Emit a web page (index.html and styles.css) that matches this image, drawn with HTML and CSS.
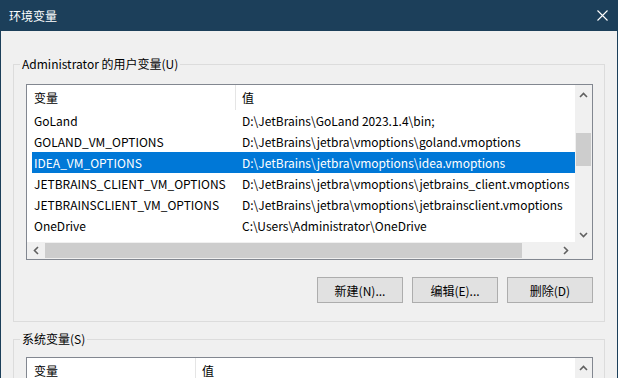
FILE: index.html
```html
<!DOCTYPE html>
<html lang="zh-CN">
<head>
  <meta charset="UTF-8">
  <meta name="viewport" content="width=device-width, initial-scale=1.0">
  <title>环境变量</title>
  <link rel="stylesheet" href="styles.css">
</head>
<body>
  <div class="window">
    <div class="titlebar">
      <span class="title">环境变量</span>
      <svg class="close" width="11" height="11" viewBox="0 0 11 11">
        <path d="M0.5 0.5 L10.5 10.5 M10.5 0.5 L0.5 10.5" stroke="#fff" stroke-width="1.1" fill="none"/>
      </svg>
    </div>

    <div class="dialog">
      <fieldset class="group group-user">
        <legend>Administrator 的用户变量(U)</legend>
        <div class="listview">
          <div class="viewport">
            <div class="row head">
              <div class="cell">变量</div>
              <div class="cell">值</div>
            </div>
            <div class="row">
              <div class="cell">GoLand</div>
              <div class="cell">D:\JetBrains\GoLand 2023.1.4\bin;</div>
            </div>
            <div class="row">
              <div class="cell">GOLAND_VM_OPTIONS</div>
              <div class="cell">D:\JetBrains\jetbra\vmoptions\goland.vmoptions</div>
            </div>
            <div class="row selected">
              <div class="cell">IDEA_VM_OPTIONS</div>
              <div class="cell">D:\JetBrains\jetbra\vmoptions\idea.vmoptions</div>
            </div>
            <div class="row">
              <div class="cell">JETBRAINS_CLIENT_VM_OPTIONS</div>
              <div class="cell">D:\JetBrains\jetbra\vmoptions\jetbrains_client.vmoptions</div>
            </div>
            <div class="row">
              <div class="cell">JETBRAINSCLIENT_VM_OPTIONS</div>
              <div class="cell">D:\JetBrains\jetbra\vmoptions\jetbrainsclient.vmoptions</div>
            </div>
            <div class="row">
              <div class="cell">OneDrive</div>
              <div class="cell">C:\Users\Administrator\OneDrive</div>
            </div>
          </div>
          <div class="vscroll">
            <svg class="arrow" width="9" height="6" viewBox="0 0 9 6"><path d="M1 5 L4.5 1.5 L8 5" stroke="#606060" stroke-width="1.6" fill="none"/></svg>
            <div class="vtrack"><div class="vthumb"></div></div>
            <svg class="arrow" width="9" height="6" viewBox="0 0 9 6"><path d="M1 1 L4.5 4.5 L8 1" stroke="#606060" stroke-width="1.6" fill="none"/></svg>
          </div>
          <div class="hscroll">
            <svg class="arrow" width="6" height="9" viewBox="0 0 6 9"><path d="M5 1 L1.5 4.5 L5 8" stroke="#606060" stroke-width="1.6" fill="none"/></svg>
            <div class="htrack"><div class="hthumb"></div></div>
            <svg class="arrow" width="6" height="9" viewBox="0 0 6 9"><path d="M1 1 L4.5 4.5 L1 8" stroke="#606060" stroke-width="1.6" fill="none"/></svg>
          </div>
          <div class="corner"></div>
        </div>
        <div class="buttons">
          <button>新建(N)...</button>
          <button>编辑(E)...</button>
          <button>删除(D)</button>
        </div>
      </fieldset>

      <fieldset class="group group-system">
        <legend>系统变量(S)</legend>
        <div class="listview">
          <div class="viewport">
            <div class="row head">
              <div class="cell">变量</div>
              <div class="cell">值</div>
            </div>
          </div>
          <div class="vscroll">
            <svg class="arrow" width="9" height="6" viewBox="0 0 9 6"><path d="M1 5 L4.5 1.5 L8 5" stroke="#606060" stroke-width="1.6" fill="none"/></svg>
            <div class="vtrack"></div>
          </div>
        </div>
      </fieldset>
    </div>
  </div>
</body>
</html>
```

FILE: styles.css
```css
body {
  margin: 0;
  height: 378px;
  overflow: hidden;
  background: #f0f0f0;
  font-family: "Noto Sans CJK SC", "Noto Sans", sans-serif;
  font-size: 12px;
  color: #000;
}
.window {
  height: 100%;
  border-left: 1px solid #1c3f5a;
  border-right: 1px solid #1c3f5a;
}
.titlebar {
  height: 31px;
  background: #1c3f5a;
  display: flex;
  align-items: center;
  justify-content: space-between;
  padding: 0 9px 0 8px;
}
.title {
  color: #fff;
  font-size: 12px;
  line-height: 16px;
}
.close {
  display: block;
}
.dialog {
  padding: 25px 12px 0 12px;
}
.group {
  margin: 0;
  border: 1px solid #dcdcdc;
  padding: 12px 11px 18px 12px;
  min-width: 0;
}
.group legend {
  margin-left: -6px;
  padding: 0 2px;
  line-height: 16px;
}
.group-system {
  margin-top: 9px;
  padding-top: 10px;
}

/* list view */
.listview {
  display: grid;
  grid-template-columns: 1fr 17px;
  grid-template-rows: 157px 17px;
  border: 1px solid #828790;
  background: #fff;
}
.viewport {
  overflow: hidden;
  background: #fff;
}
.row {
  display: grid;
  grid-template-columns: 204px 1fr;
  margin-left: 5px;
  height: 21px;
  line-height: 21px;
  white-space: nowrap;
}
.row .cell:first-child {
  padding-left: 2px;
}
.row .cell:last-child {
  padding-left: 6px;
}
.row.head {
  height: 25px;
  line-height: 25px;
}
.row.head .cell:first-child {
  border-right: 1px solid #e5e5e5;
}
.row.selected {
  background: #0078d7;
  color: #fff;
}
.group-system .row {
  grid-template-columns: 164px 1fr;
}

/* scroll bars */
.vscroll {
  background: #f0f0f0;
  display: flex;
  flex-direction: column;
  align-items: center;
}
.vscroll .arrow {
  margin: 7px 0 4px;
}
.vtrack {
  flex: 1;
  align-self: stretch;
  padding-top: 31px;
}
.vthumb {
  height: 33px;
  margin-left: 1px;
  width: 15px;
  background: #cdcdcd;
}
.hscroll {
  background: #f0f0f0;
  display: flex;
  align-items: center;
  padding: 0 6px 0 6px;
}
.htrack {
  flex: 1;
  align-self: stretch;
  padding: 1px 7px 1px 6px;
}
.hthumb {
  height: 100%;
  margin-right: 34px;
  background: #cdcdcd;
}
.corner {
  background: #f0f0f0;
}
.group-system .listview {
  grid-template-rows: 120px;
}

/* buttons */
.buttons {
  display: flex;
  justify-content: flex-end;
  gap: 9px;
  margin-top: 17px;
}
.buttons button {
  width: 86px;
  height: 26px;
  padding: 0;
  background: #e1e1e1;
  border: 1px solid #adadad;
  font-family: inherit;
  font-size: 12px;
  color: #000;
}
```
